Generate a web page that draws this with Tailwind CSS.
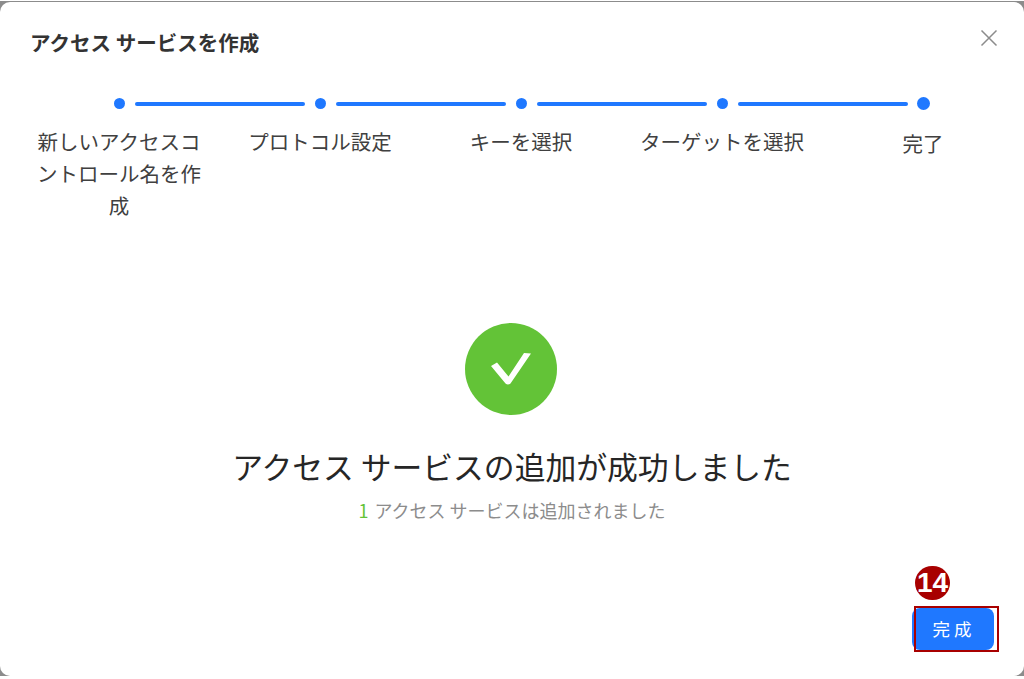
<!DOCTYPE html>
<html lang="ja">
<head>
  <meta charset="UTF-8" />
  <title>アクセス サービスを作成</title>
  <script src="https://cdn.jsdelivr.net/npm/@tailwindcss/browser@4"></script>
</head>
<body class="bg-white w-[1024px] h-[679px] overflow-hidden font-['Noto_Sans_CJK_JP','Noto_Sans',sans-serif] text-[#262626]">
  <div class="bg-[#8c8c8c] h-[675px]">
    <div class="relative bg-white h-[674px] mt-[1px] top-[1px] rounded-[10px] flex flex-col">
      <header class="flex items-start justify-between pl-[30px] pr-[26px] pt-[24px]">
        <h1 class="text-[20.5px] leading-[32px] font-bold text-[#333333]">アクセス サービスを作成</h1>
        <button class="mt-[3px] text-[#8c8c8c]">
          <svg width="18" height="18" viewBox="0 0 18 18" fill="none" stroke="currentColor" stroke-width="1.5"><path d="M1.5 1.5 16.5 16.5M16.5 1.5 1.5 16.5"/></svg>
        </button>
      </header>

      <!-- Steps -->
      <ol class="grid grid-cols-[repeat(5,201px)] pl-[18.5px] mt-[39px]">
        <li class="relative flex flex-col items-center">
          <span class="w-[11px] h-[11px] mt-[1px] rounded-full bg-[#1f78ff]"></span>
          <span class="absolute left-[116px] top-[5px] w-[170px] h-[4px] rounded-full bg-[#1f78ff]"></span>
          <p class="w-[170px] mt-[16px] text-[20.5px] leading-[32px] text-center text-[#404040]">新しいアクセスコントロール名を作成</p>
        </li>
        <li class="relative flex flex-col items-center">
          <span class="w-[11px] h-[11px] mt-[1px] rounded-full bg-[#1f78ff]"></span>
          <span class="absolute left-[116px] top-[5px] w-[170px] h-[4px] rounded-full bg-[#1f78ff]"></span>
          <p class="w-[170px] mt-[16px] text-[20.5px] leading-[32px] text-center text-[#404040]">プロトコル設定</p>
        </li>
        <li class="relative flex flex-col items-center">
          <span class="w-[11px] h-[11px] mt-[1px] rounded-full bg-[#1f78ff]"></span>
          <span class="absolute left-[116px] top-[5px] w-[170px] h-[4px] rounded-full bg-[#1f78ff]"></span>
          <p class="w-[170px] mt-[16px] text-[20.5px] leading-[32px] text-center text-[#404040]">キーを選択</p>
        </li>
        <li class="relative flex flex-col items-center">
          <span class="w-[11px] h-[11px] mt-[1px] rounded-full bg-[#1f78ff]"></span>
          <span class="absolute left-[116px] top-[5px] w-[170px] h-[4px] rounded-full bg-[#1f78ff]"></span>
          <p class="w-[170px] mt-[16px] text-[20.5px] leading-[32px] text-center text-[#404040]">ターゲットを選択</p>
        </li>
        <li class="flex flex-col items-center">
          <span class="w-[13px] h-[13px] rounded-full bg-[#1f78ff]"></span>
          <p class="w-[170px] mt-[17px] text-[20.5px] leading-[32px] text-center text-[#404040]">完了</p>
        </li>
      </ol>

      <!-- Result -->
      <section class="flex flex-col items-center mt-[102px]">
        <div class="w-[92px] h-[92px] mr-[2px] rounded-full bg-[#63c337] flex items-center justify-center">
          <svg width="42" height="34" viewBox="0 0 42 34" fill="#fff"><path d="M1 14 7 10.500 18.500 24.500 34 1 41 1.500 20.500 31.500Q18 33.500 15.500 31.500Z"/></svg>
        </div>
        <h2 class="mt-[28px] text-[30.800px] leading-[46px] text-[#262626]">アクセス サービスの追加が成功しました</h2>
        <p class="mt-[9px] text-[18px] leading-[24px] text-[#8c8c8c]"><span class="text-[#63c337] mr-[6px]">1</span>アクセス サービスは追加されました</p>
      </section>

      <!-- Footer -->
      <footer class="flex justify-end pr-[30px] mt-[86px]">
        <button class="relative w-[82px] h-[42px] rounded-[8px] bg-[#1f78ff] text-white text-[17.500px] tracking-[4px] pl-[2px]">
          完成
          <span class="absolute left-[3px] -top-[42px] w-[35px] h-[34px] rounded-full bg-[#a80000] text-white text-[28px] leading-[34px] font-bold font-['Liberation_Sans',sans-serif] tracking-normal text-center">14</span>
          <span class="absolute left-[2px] -top-[2px] w-[85px] h-[46px] border-[2px] border-[#a80000]"></span>
        </button>
      </footer>
    </div>
  </div>
</body>
</html>
